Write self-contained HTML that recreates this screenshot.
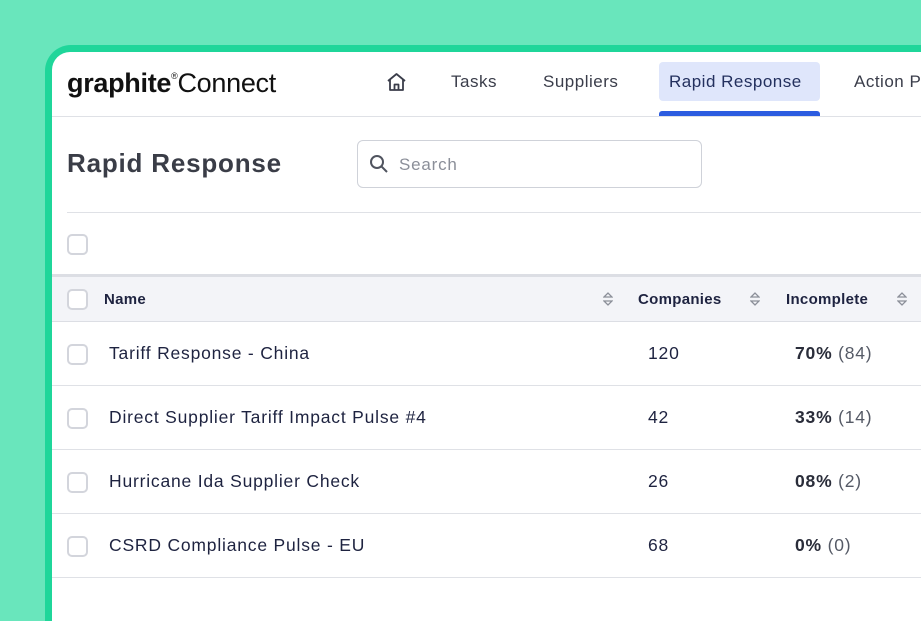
<!DOCTYPE html>
<html><head><meta charset="utf-8"><style>
*{box-sizing:border-box;margin:0;padding:0}
html,body{width:921px;height:621px;overflow:hidden}
body{background:#69e6bc;font-family:"Liberation Sans",sans-serif;position:relative}
.card{position:absolute;left:45px;top:45px;width:876px;height:576px;background:#1fd69a;border-radius:26px 0 0 0;overflow:hidden}
.inner{position:absolute;left:7px;top:7px;width:869px;height:569px;background:#fff;border-radius:18px 0 0 0;overflow:hidden}
.abs{position:absolute;white-space:nowrap}
.nav{font-size:17px;color:#3a3d4a;letter-spacing:0.5px}
.cb{position:absolute;width:21px;height:21px;border:2px solid #d3d5dc;border-radius:5px;background:#fff}
.row{position:absolute;left:0;width:869px;height:64px;border-bottom:1px solid #dfe1e6}
.row .t,.row .c,.row .p{position:absolute;top:21px;font-size:17.5px;color:#1e2340;letter-spacing:0.8px}
.row .t{left:57px}
.row .c{left:596px}
.row .p{left:743px;color:#555a66}
.row .p b{color:#2a2d3a}
.row .cb{left:15px;top:22px}
.th{font-size:15px;font-weight:bold;color:#1e2340;letter-spacing:0.3px}
.sort{position:absolute;width:10px;height:16px}
</style></head><body>
<div class="card">
<div class="inner">
 <div class="abs" style="left:15px;top:16px;font-size:27px;color:#111;letter-spacing:-0.3px"><b>graphite</b><sup style="font-size:9px;vertical-align:13px">®</sup>Connect</div>
 <svg class="abs" style="left:334px;top:20px" width="21" height="20" viewBox="0 0 21 20" fill="none" stroke="#3a3d4a" stroke-width="1.8" stroke-linejoin="round"><path d="M2 9 L10.5 2 L19 9"/><path d="M4 7.5 V18 H17 V7.5"/><path d="M8.5 18 V12.5 H12.5 V18"/></svg>
 <div class="abs nav" style="left:399px;top:20px">Tasks</div>
 <div class="abs nav" style="left:491px;top:20px">Suppliers</div>
 <div class="abs" style="left:607px;top:10px;width:161px;height:39px;background:#dfe6fb;border-radius:4px"></div>
 <div class="abs nav" style="left:617px;top:20px;color:#23305e">Rapid Response</div>
 <div class="abs" style="left:607px;top:59px;width:161px;height:5px;background:#2c5ce0;border-radius:3px 3px 0 0"></div>
 <div class="abs nav" style="left:802px;top:20px">Action Plans</div>
 <div class="abs" style="left:0;top:64px;width:869px;height:1px;background:#dfe1e6"></div>
 <div class="abs" style="left:15px;top:96px;font-size:26px;font-weight:bold;color:#3a3d47;letter-spacing:0.8px">Rapid Response</div>
 <div class="abs" style="left:305px;top:88px;width:345px;height:48px;border:1px solid #cfd2d9;border-radius:6px"></div>
 <svg class="abs" style="left:317px;top:102px" width="20" height="20" viewBox="0 0 20 20" fill="none" stroke="#50545f" stroke-width="2"><circle cx="8" cy="8" r="6"/><path d="M12.5 12.5 L18 18"/></svg>
 <div class="abs" style="left:347px;top:103px;font-size:17px;color:#8b8f99;letter-spacing:0.8px">Search</div>
 <div class="abs" style="left:15px;top:160px;width:854px;height:1px;background:#dfe1e6"></div>
 <div class="cb" style="left:15px;top:182px"></div>
 <div class="abs" style="left:0;top:222px;width:869px;height:48px;background:#f3f4f8;border-top:3px solid #dcdee4;border-bottom:1px solid #dcdee4">
  <div class="cb" style="left:15px;top:12px"></div>
  <div class="abs th" style="left:52px;top:14px">Name</div>
  <div class="abs th" style="left:586px;top:14px">Companies</div>
  <div class="abs th" style="left:734px;top:14px">Incomplete</div>
  <svg class="sort" style="left:551px;top:14px" viewBox="0 0 10 16" fill="none" stroke="#8b8f99" stroke-width="1.3"><path d="M1 6 L5 2 L9 6 Z M1 10 L5 14 L9 10 Z"/></svg>
  <svg class="sort" style="left:698px;top:14px" viewBox="0 0 10 16" fill="none" stroke="#8b8f99" stroke-width="1.3"><path d="M1 6 L5 2 L9 6 Z M1 10 L5 14 L9 10 Z"/></svg>
  <svg class="sort" style="left:845px;top:14px" viewBox="0 0 10 16" fill="none" stroke="#8b8f99" stroke-width="1.3"><path d="M1 6 L5 2 L9 6 Z M1 10 L5 14 L9 10 Z"/></svg>
 </div>
 <div class="row" style="top:270px"><div class="cb"></div><div class="t">Tariff Response - China</div><div class="c">120</div><div class="p"><b>70%</b> (84)</div></div>
 <div class="row" style="top:334px"><div class="cb"></div><div class="t">Direct Supplier Tariff Impact Pulse #4</div><div class="c">42</div><div class="p"><b>33%</b> (14)</div></div>
 <div class="row" style="top:398px"><div class="cb"></div><div class="t">Hurricane Ida Supplier Check</div><div class="c">26</div><div class="p"><b>08%</b> (2)</div></div>
 <div class="row" style="top:462px"><div class="cb"></div><div class="t">CSRD Compliance Pulse - EU</div><div class="c">68</div><div class="p"><b>0%</b> (0)</div></div>
</div>
</div>
</body></html>
